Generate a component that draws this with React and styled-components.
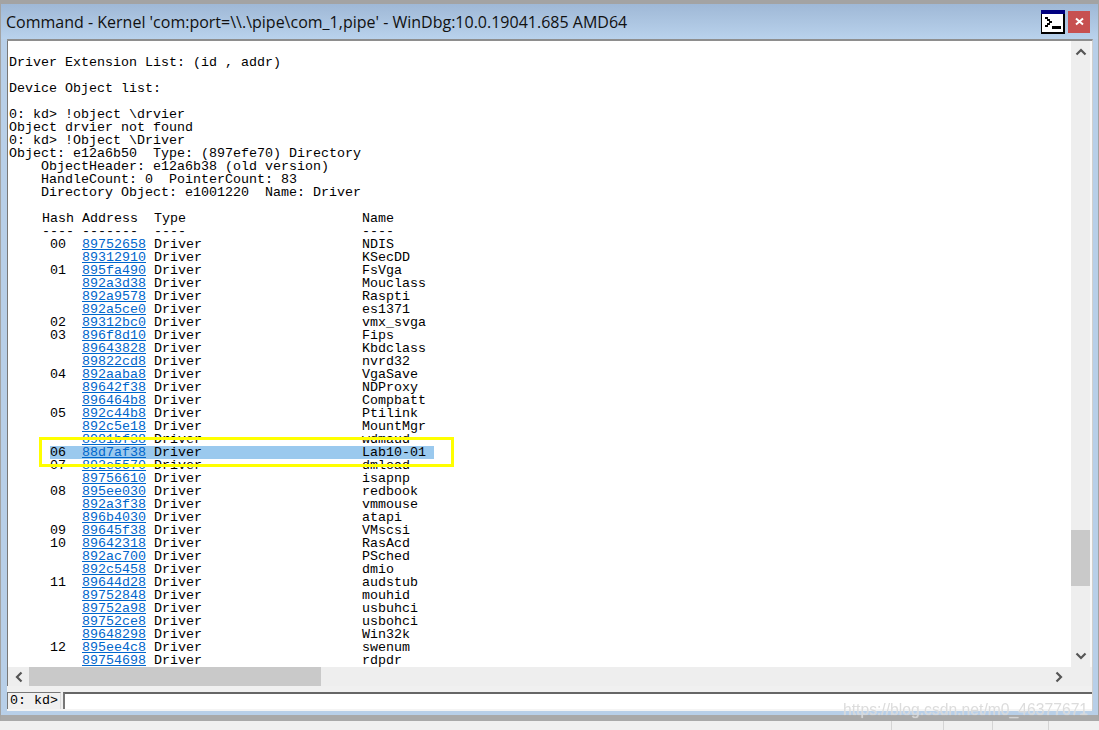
import styled, { createGlobalStyle } from "styled-components";

const GlobalStyle = createGlobalStyle`
  html, body { margin: 0; padding: 0; background: #f0f0f0; }
  body { width: 1099px; height: 730px; overflow: hidden; }
`;

const Page = styled.div`
  position: relative;
  width: 1099px;
  height: 730px;
  display: flex;
  flex-direction: column;
  background: #f0f0f0;
  overflow: hidden;
`;

const Frame = styled.div`
  height: 721px;
  flex: none;
  box-sizing: border-box;
  display: flex;
  flex-direction: column;
  background: #b8cfe8;
  border-top: 4px solid #a3a3a3;
  border-left: 1px solid #a3a3a3;
  border-right: 1px solid #a3a3a3;
  border-bottom: 6px solid #a9a9a9;
`;

const TitleBar = styled.div`
  height: 35px;
  flex: none;
  display: flex;
  align-items: center;
  gap: 3px;
  padding: 0 8px 0 5px;
  background: linear-gradient(#9fb8d6, #b9d2ec);
`;

const Title = styled.div`
  flex: 1;
  font: 16px "Open Sans", "Noto Sans", sans-serif;
  color: #111;
  white-space: nowrap;
`;

const CloseButton = styled.div`
  width: 22px;
  height: 22px;
  display: flex;
  align-items: center;
  justify-content: center;
  background: #c75050;
  color: #fff;
`;

const Client = styled.div`
  flex: 1;
  min-height: 0;
  margin: 0 5px 5px 6px;
  display: flex;
  flex-direction: column;
  background: #fff;
  border-top: 2px solid #8e8e8e;
  border-right: 1px solid #cfcfcf;
`;

const OutputArea = styled.div`
  flex: none;
  height: 626px;
  display: flex;
  border-left: 1px solid #777;
`;

const Output = styled.div`
  position: relative;
  flex: 1;
  overflow: hidden;
  padding: 15px 0 0 1px;
  font: 13.333px/13px "Liberation Mono", "Courier New", monospace;
  color: #000;
  white-space: pre;
`;

const Line = styled.div`
  height: 13px;
  padding-left: ${(p) => p.$indent || 0}px;
`;

const Row = styled.div`
  display: grid;
  grid-template-columns: 32px 72px 208px 72px;
  width: 384px;
  height: 13px;
  margin-left: 41px;
  background: ${(p) => (p.$selected ? "#9ac9ee" : "transparent")};
`;

const HeadHash = styled.span`
  margin-left: -8px;
`;

const Address = styled.span`
  color: #0066cc;
  text-decoration: underline;
`;

const Callout = styled.div`
  position: absolute;
  left: 31px;
  top: 396px;
  width: 409px;
  height: 24px;
  border: 3px solid #ffff00;
`;

const VScroll = styled.div`
  flex: none;
  width: 19px;
  display: flex;
  flex-direction: column;
  justify-content: space-between;
  align-items: center;
  padding: 5px 0;
  position: relative;
  background: #eeeeee;
  border-right: 2px solid #f8f8f8;
`;

const VThumb = styled.div`
  position: absolute;
  left: 0;
  top: 489px;
  width: 19px;
  height: 56px;
  background: #c9c9c9;
`;

const HScroll = styled.div`
  flex: none;
  height: 19px;
  display: flex;
  align-items: center;
  background: #eeeeee;
  padding-right: 27px;
  border-left: 1px solid #777;
`;

const ArrowSlot = styled.div`
  width: 21px;
  display: flex;
  justify-content: center;
`;

const HThumb = styled.div`
  width: 292px;
  height: 19px;
  background: #c9c9c9;
  margin-right: auto;
`;

const CommandRow = styled.div`
  flex: 1;
  display: flex;
  box-sizing: border-box;
  padding-top: 6px;
  background: #f0f0f0;
  border-bottom: 2px solid #f4f4f4;
`;

const Prompt = styled.div`
  width: 54px;
  box-sizing: border-box;
  padding-left: 2px;
  margin-right: 2px;
  font: 13.333px/16px "Liberation Mono", "Courier New", monospace;
  background: #f0f0f0;
  border-top: 1px solid #777;
  border-left: 1px solid #777;
  border-right: 1px solid #ddd;
  white-space: pre;
`;

const CommandInput = styled.div`
  flex: 1;
  background: #fff;
  border-top: 2px solid #666;
  border-left: 2px solid #777;
`;

const StatusStrip = styled.div`
  flex: 1;
  display: flex;
  justify-content: flex-end;
  padding-right: 50px;
`;

const StatusCell = styled.div`
  width: ${(p) => p.$width}px;
  box-sizing: border-box;
  border-right: 1px solid #d4d4d4;
`;

const Watermark = styled.div`
  position: absolute;
  left: 843px;
  top: 701px;
  font: 15.7px "Liberation Sans", Arial, sans-serif;
  color: rgba(212, 212, 212, 0.82);
  text-shadow: 0 0 1px rgba(255, 255, 255, 0.6);
  filter: blur(0.4px);
  white-space: nowrap;
`;

const Chevron = ({ d }) => (
  <svg width="12" height="12" viewBox="0 0 12 12" fill="none" stroke="#555" strokeWidth="2.2">
    <path d={d} />
  </svg>
);

const TerminalIcon = () => (
  <svg width="24" height="24" viewBox="0 0 24 24">
    <rect width="24" height="24" fill="#000" />
    <rect x="0" y="0" width="24" height="4" fill="#000080" />
    <rect x="1" y="4" width="21" height="18" fill="#fff" />
    <path d="M4 7h3v2h2v2h2v2h-2v2h-2v2h-3v-2h2v-2h2v-2h-2v-2h-2z" fill="#000" />
    <rect x="11" y="16" width="9" height="3" fill="#000" />
  </svg>
);

const drivers = [
  ["00", "89752658", "NDIS"],
  ["", "89312910", "KSecDD"],
  ["01", "895fa490", "FsVga"],
  ["", "892a3d38", "Mouclass"],
  ["", "892a9578", "Raspti"],
  ["", "892a5ce0", "es1371"],
  ["02", "89312bc0", "vmx_svga"],
  ["03", "896f8d10", "Fips"],
  ["", "89643828", "Kbdclass"],
  ["", "89822cd8", "nvrd32"],
  ["04", "892aaba8", "VgaSave"],
  ["", "89642f38", "NDProxy"],
  ["", "896464b8", "Compbatt"],
  ["05", "892c44b8", "Ptilink"],
  ["", "892c5e18", "MountMgr"],
  ["", "8981bf38", "wdmaud"],
  ["06", "88d7af38", "Lab10-01"],
  ["07", "892e5570", "dmload"],
  ["", "89756610", "isapnp"],
  ["08", "895ee030", "redbook"],
  ["", "892a3f38", "vmmouse"],
  ["", "896b4030", "atapi"],
  ["09", "89645f38", "VMscsi"],
  ["10", "89642318", "RasAcd"],
  ["", "892ac700", "PSched"],
  ["", "892c5458", "dmio"],
  ["11", "89644d28", "audstub"],
  ["", "89752848", "mouhid"],
  ["", "89752a98", "usbuhci"],
  ["", "89752ce8", "usbohci"],
  ["", "89648298", "Win32k"],
  ["12", "895ee4c8", "swenum"],
  ["", "89754698", "rdpdr"],
];

const App = () => (
  <Page>
    <GlobalStyle />
    <Frame>
      <TitleBar>
        <Title>{"Command - Kernel 'com:port=\\\\.\\pipe\\com_1,pipe' - WinDbg:10.0.19041.685 AMD64"}</Title>
        <TerminalIcon />
        <CloseButton>
          <svg width="9" height="9" viewBox="0 0 9 9" stroke="#fff" strokeWidth="2">
            <path d="M1 1.5l7 6M8 1.5l-7 6" />
          </svg>
        </CloseButton>
      </TitleBar>
      <Client>
        <OutputArea>
          <Output>
            <Line>Driver Extension List: (id , addr)</Line>
            <Line />
            <Line>Device Object list:</Line>
            <Line />
            <Line>{"0: kd> !object \\drvier"}</Line>
            <Line>Object drvier not found</Line>
            <Line>{"0: kd> !Object \\Driver"}</Line>
            <Line>Object: e12a6b50  Type: (897efe70) Directory</Line>
            <Line $indent={32}>ObjectHeader: e12a6b38 (old version)</Line>
            <Line $indent={32}>HandleCount: 0  PointerCount: 83</Line>
            <Line $indent={32}>Directory Object: e1001220  Name: Driver</Line>
            <Line />
            <Row>
              <HeadHash>Hash</HeadHash>
              <span>Address</span>
              <span>Type</span>
              <span>Name</span>
            </Row>
            <Row>
              <HeadHash>----</HeadHash>
              <span>-------</span>
              <span>----</span>
              <span>----</span>
            </Row>
            {drivers.map(([hash, addr, name]) => (
              <Row key={addr} $selected={name === "Lab10-01"}>
                <span>{hash}</span>
                <span><Address>{addr}</Address></span>
                <span>Driver</span>
                <span>{name}</span>
              </Row>
            ))}
            <Callout />
          </Output>
          <VScroll>
            <Chevron d="M1.5 8.5L6 4l4.5 4.5" />
            <VThumb />
            <Chevron d="M1.5 3.5L6 8l4.5-4.5" />
          </VScroll>
        </OutputArea>
        <HScroll>
          <ArrowSlot><Chevron d="M8.5 1.5L4 6l4.5 4.5" /></ArrowSlot>
          <HThumb />
          <Chevron d="M3.5 1.5L8 6l-4.5 4.5" />
        </HScroll>
        <CommandRow>
          <Prompt>0: kd&gt;</Prompt>
          <CommandInput />
        </CommandRow>
      </Client>
    </Frame>
    <StatusStrip>
      <StatusCell $width={1} />
      <StatusCell $width={52} />
      <StatusCell $width={49} />
      <StatusCell $width={56} />
    </StatusStrip>
    <Watermark>https://blog.csdn.net/m0_46377671</Watermark>
  </Page>
);

export default App;
